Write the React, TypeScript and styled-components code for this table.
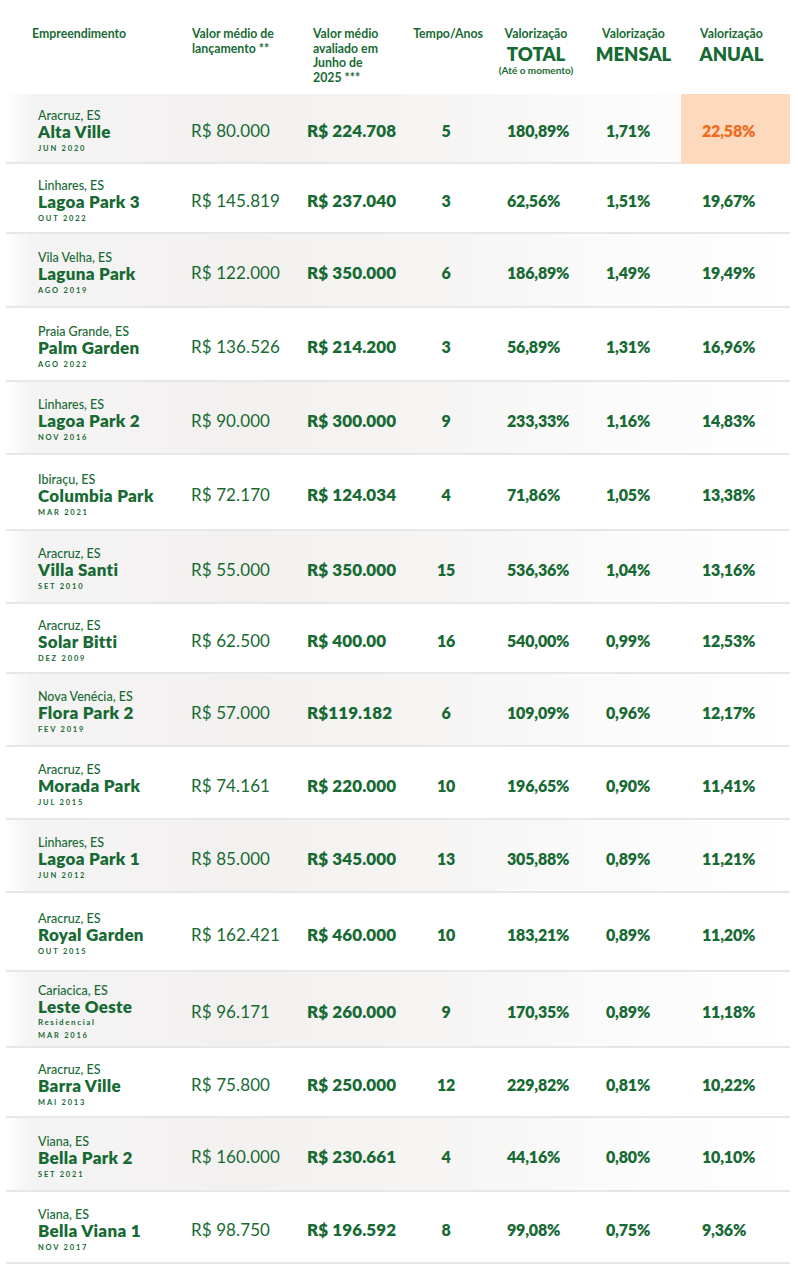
import React from "react";
import styled, { createGlobalStyle, css } from "styled-components";

const Global = createGlobalStyle`
  html, body { margin: 0; padding: 0; background: #ffffff; }
  body { font-family: Lato, "Noto Sans", Arial, sans-serif; -webkit-font-smoothing: antialiased; }
`;

const GREEN = "#176a33";

type Row = {
  city: string;
  name: string;
  sub?: string;
  date: string;
  launch: string;
  now: string;
  years: string;
  total: string;
  monthly: string;
  annual: string;
  h: number;
  hl?: boolean;
};

const rows: Row[] = [
  { city: "Aracruz, ES", name: "Alta Ville", date: "JUN 2020", launch: "R$ 80.000", now: "R$ 224.708", years: "5", total: "180,89%", monthly: "1,71%", annual: "22,58%", h: 70, hl: true },
  { city: "Linhares, ES", name: "Lagoa Park 3", date: "OUT 2022", launch: "R$ 145.819", now: "R$ 237.040", years: "3", total: "62,56%", monthly: "1,51%", annual: "19,67%", h: 70 },
  { city: "Vila Velha, ES", name: "Laguna Park", date: "AGO 2019", launch: "R$ 122.000", now: "R$ 350.000", years: "6", total: "186,89%", monthly: "1,49%", annual: "19,49%", h: 74 },
  { city: "Praia Grande, ES", name: "Palm Garden", date: "AGO 2022", launch: "R$ 136.526", now: "R$ 214.200", years: "3", total: "56,89%", monthly: "1,31%", annual: "16,96%", h: 74 },
  { city: "Linhares, ES", name: "Lagoa Park 2", date: "NOV 2016", launch: "R$ 90.000", now: "R$ 300.000", years: "9", total: "233,33%", monthly: "1,16%", annual: "14,83%", h: 73 },
  { city: "Ibiraçu, ES", name: "Columbia Park", date: "MAR 2021", launch: "R$ 72.170", now: "R$ 124.034", years: "4", total: "71,86%", monthly: "1,05%", annual: "13,38%", h: 76 },
  { city: "Aracruz, ES", name: "Villa Santi", date: "SET 2010", launch: "R$ 55.000", now: "R$ 350.000", years: "15", total: "536,36%", monthly: "1,04%", annual: "13,16%", h: 73 },
  { city: "Aracruz, ES", name: "Solar Bitti", date: "DEZ 2009", launch: "R$ 62.500", now: "R$ 400.00", years: "16", total: "540,00%", monthly: "0,99%", annual: "12,53%", h: 70 },
  { city: "Nova Venécia, ES", name: "Flora Park 2", date: "FEV 2019", launch: "R$ 57.000", now: "R$119.182", years: "6", total: "109,09%", monthly: "0,96%", annual: "12,17%", h: 73 },
  { city: "Aracruz, ES", name: "Morada Park", date: "JUL 2015", launch: "R$ 74.161", now: "R$ 220.000", years: "10", total: "196,65%", monthly: "0,90%", annual: "11,41%", h: 73 },
  { city: "Linhares, ES", name: "Lagoa Park 1", date: "JUN 2012", launch: "R$ 85.000", now: "R$ 345.000", years: "13", total: "305,88%", monthly: "0,89%", annual: "11,21%", h: 73 },
  { city: "Aracruz, ES", name: "Royal Garden", date: "OUT 2015", launch: "R$ 162.421", now: "R$ 460.000", years: "10", total: "183,21%", monthly: "0,89%", annual: "11,20%", h: 79 },
  { city: "Cariacica, ES", name: "Leste Oeste", sub: "Residencial", date: "MAR 2016", launch: "R$ 96.171", now: "R$ 260.000", years: "9", total: "170,35%", monthly: "0,89%", annual: "11,18%", h: 76 },
  { city: "Aracruz, ES", name: "Barra Ville", date: "MAI 2013", launch: "R$ 75.800", now: "R$ 250.000", years: "12", total: "229,82%", monthly: "0,81%", annual: "10,22%", h: 70 },
  { city: "Viana, ES", name: "Bella Park 2", date: "SET 2021", launch: "R$ 160.000", now: "R$ 230.661", years: "4", total: "44,16%", monthly: "0,80%", annual: "10,10%", h: 74 },
  { city: "Viana, ES", name: "Bella Viana 1", date: "NOV 2017", launch: "R$ 98.750", now: "R$ 196.592", years: "8", total: "99,08%", monthly: "0,75%", annual: "9,36%", h: 72 },
];

const COLS = "179px 116px 99px 92px 104px 85px 109px";

const Page = styled.div`
  width: 798px;
  height: 1285px;
  padding: 0 8px 0 6px;
  box-sizing: border-box;
  color: ${GREEN};
`;

const HeaderRow = styled.div`
  display: grid;
  grid-template-columns: ${COLS};
  height: 94px;
  box-sizing: border-box;
  padding-top: 27px;
`;

const HeadCell = styled.div<{ $pl?: number; $center?: boolean; $shift?: number }>`
  font-size: 12.3px;
  font-weight: 700;
  line-height: 14.7px;
  padding-left: ${(p) => p.$pl ?? 0}px;
  white-space: nowrap;
  ${(p) =>
    p.$center &&
    css`
      text-align: center;
      transform: translateX(${p.$shift ?? 0}px);
    `}
`;

const HeadBig = styled.div`
  font-size: 18.5px;
  font-weight: 800;
  line-height: 20px;
  margin-top: 2px;
`;

const HeadSmall = styled.div`
  font-size: 10px;
  font-weight: 700;
  line-height: 12px;
`;

const DataRow = styled.div<{ $h: number; $alt: boolean }>`
  display: grid;
  grid-template-columns: ${COLS};
  height: ${(p) => p.$h}px;
  background: ${(p) =>
    p.$alt
      ? "linear-gradient(90deg, #ffffff 0%, #f5f4f4 3%, #f3f1f0 30%, #f6f5f4 55%, #fcfbfb 80%, #ffffff 100%)"
      : "#ffffff"};
`;

const Cell = styled.div<{ $pl?: number; $center?: boolean; $hl?: boolean }>`
  display: flex;
  flex-direction: column;
  justify-content: center;
  align-items: ${(p) => (p.$center ? "center" : "flex-start")};
  padding-left: ${(p) => p.$pl ?? 0}px;
  padding-top: 5px;
  border-bottom: 2px solid ${(p) => (p.$hl ? "#fdd9bd" : "#e7e7e7")};
  background: ${(p) => (p.$hl ? "#fdd9bd" : "transparent")};
  color: ${(p) => (p.$hl ? "#f06a1b" : GREEN)};
  white-space: nowrap;
`;

const City = styled.div`
  font-size: 12.5px;
  font-weight: 500;
  line-height: 15px;
`;

const Name = styled.div`
  font-size: 17px;
  font-weight: 800;
  line-height: 18px;
  letter-spacing: 0.3px;
`;

const Sub = styled.div`
  font-size: 8px;
  font-weight: 700;
  letter-spacing: 1.6px;
  line-height: 11px;
  margin-top: 1px;
`;

const Date = styled.div`
  font-size: 7.5px;
  font-weight: 700;
  letter-spacing: 1.8px;
  line-height: 11px;
  margin-top: 2px;
`;

const Money = styled.div<{ $bold?: boolean }>`
  font-size: 17px;
  font-weight: ${(p) => (p.$bold ? 800 : 400)};
  letter-spacing: ${(p) => (p.$bold ? "0.1px" : "0.1px")};
`;

const Pct = styled.div`
  font-size: 16px;
  font-weight: 800;
  letter-spacing: -0.2px;
`;

export default function App() {
  return (
    <>
      <Global />
      <Page>
        <HeaderRow>
          <HeadCell $pl={26}>Empreendimento</HeadCell>
          <HeadCell $pl={7}>
            Valor médio de
            <br />
            lançamento **
          </HeadCell>
          <HeadCell $pl={12}>
            Valor médio
            <br />
            avaliado em
            <br />
            Junho de
            <br />
            2025 ***
          </HeadCell>
          <HeadCell $center $shift={2}>Tempo/Anos</HeadCell>
          <HeadCell $center $shift={-8}>
            Valorização
            <HeadBig>TOTAL</HeadBig>
            <HeadSmall>(Até o momento)</HeadSmall>
          </HeadCell>
          <HeadCell $center $shift={-5}>
            Valorização
            <HeadBig>MENSAL</HeadBig>
          </HeadCell>
          <HeadCell $center $shift={-4}>
            Valorização
            <HeadBig>ANUAL</HeadBig>
          </HeadCell>
        </HeaderRow>
        {rows.map((r, i) => (
          <DataRow key={r.name} $h={r.h} $alt={i % 2 === 0}>
            <Cell $pl={32}>
              <City>{r.city}</City>
              <Name>{r.name}</Name>
              {r.sub && <Sub>{r.sub}</Sub>}
              <Date>{r.date}</Date>
            </Cell>
            <Cell $pl={6}>
              <Money>{r.launch}</Money>
            </Cell>
            <Cell $pl={6}>
              <Money $bold>{r.now}</Money>
            </Cell>
            <Cell $center>
              <Pct>{r.years}</Pct>
            </Cell>
            <Cell $pl={15}>
              <Pct>{r.total}</Pct>
            </Cell>
            <Cell $pl={10}>
              <Pct>{r.monthly}</Pct>
            </Cell>
            <Cell $pl={21} $hl={r.hl}>
              <Pct>{r.annual}</Pct>
            </Cell>
          </DataRow>
        ))}
      </Page>
    </>
  );
}
